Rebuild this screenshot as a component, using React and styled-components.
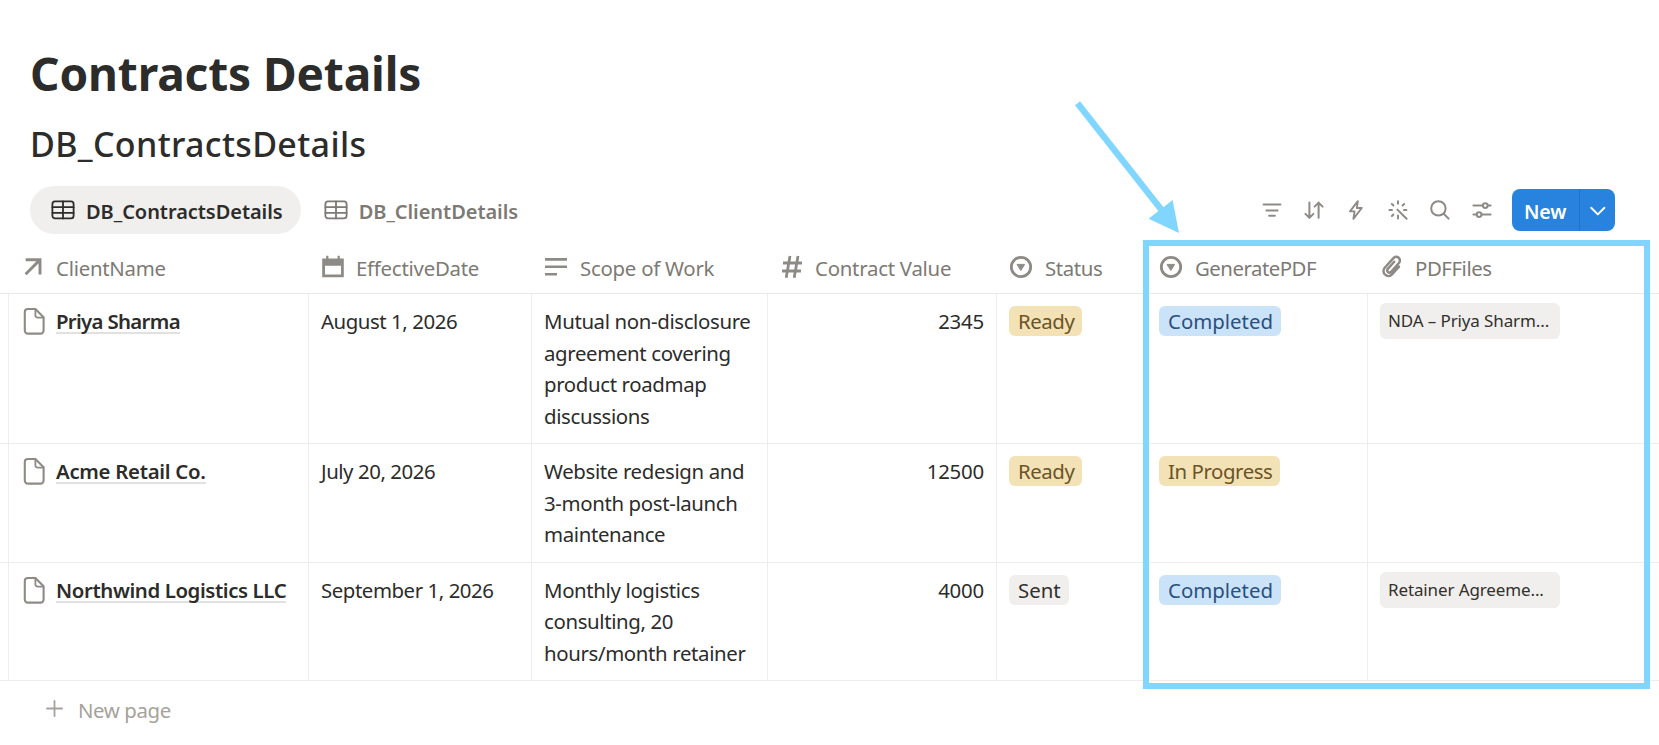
import React from 'react';
import styled, { createGlobalStyle } from 'styled-components';


const GlobalStyle = createGlobalStyle`
  *, *::before, *::after {
    box-sizing: border-box;
  }

  body {
    margin: 0;
    background: #ffffff;
    overflow: hidden;
  }
`;

const Page = styled.div`
  position: relative;
  width: 1659px;
  height: 745px;
  padding-top: 45px;
  overflow: hidden;
  background: #ffffff;
  color: #2c2c2b;
  font-family: 'Noto Sans', 'Open Sans', sans-serif;
  font-size: 20.4px;
  line-height: 31.5px;
  letter-spacing: -0.2px;
`;

const Title = styled.h1`
  margin: 0 0 21px 30px;
  font-size: 46px;
  line-height: 56px;
  font-weight: 700;
  letter-spacing: -0.12px;
`;

const Subtitle = styled.h2`
  margin: 0 0 20px 30px;
  font-size: 34px;
  line-height: 44px;
  font-weight: 500;
  letter-spacing: 0.35px;
`;

const Toolbar = styled.div`
  display: flex;
  align-items: center;
  justify-content: space-between;
  height: 48px;
  padding: 0 44px 0 30px;
  margin-bottom: 6px;
`;

const Tabs = styled.div`
  display: flex;
`;

const Tab = styled.button`
  display: flex;
  align-items: center;
  gap: 11px;
  height: 48px;
  padding: 0 18px 0 21px;
  margin: 0;
  border: 0;
  border-radius: 24px;
  background: ${(p) => (p.$active ? '#f0efed' : 'transparent')};
  color: ${(p) => (p.$active ? '#2c2c2b' : '#7d7a75')};
  font: inherit;
  font-size: 20px;
  font-weight: 600;
  letter-spacing: -0.05px;
  white-space: nowrap;

  span {
    padding-top: 4px;
    line-height: 30px;
  }

  & + & {
    margin-left: 2px;
  }
`;

const Actions = styled.div`
  display: flex;
  align-items: center;
  gap: 18px;
  color: #8e8b86;
`;

const NewButton = styled.div`
  display: flex;
  height: 42px;
  border-radius: 8px;
  background: #2783de;
  color: #ffffff;
  overflow: hidden;
`;

const NewLabel = styled.div`
  width: 68px;
  padding: 2px 0 0 12px;
  border-right: 1px solid #2273c5;
  font-size: 19.5px;
  font-weight: 600;
  line-height: 41px;
  letter-spacing: -0.1px;
`;

const NewMenu = styled.div`
  display: flex;
  align-items: center;
  justify-content: center;
  width: 35px;
  padding-top: 1px;
`;

const Row = styled.div`
  display: grid;
  grid-template-columns: 9px 300px 223px 236px 229px 150px 221px 1fr;
  border-bottom: 1px solid #ededec;
`;

const HeaderRow = styled(Row)`
  height: 54px;
  border-bottom-color: #e9e9e7;
`;

const HeaderCell = styled.div`
  display: flex;
  align-items: center;
  gap: 11px;
  padding-left: 12px;
  color: #7d7a75;
  white-space: nowrap;

  span {
    padding: 3px 0 0 ${(p) => p.$indent || '0'};
    line-height: 30px;
    letter-spacing: ${(p) => p.$track || '-0.25px'};
  }

  svg {
    color: #8e8b86;
  }
`;

const Cell = styled.div`
  padding: 12px 12px 11px;
  border-right: ${(p) => (p.$last ? '0' : '1px solid #ededec')};
  text-align: ${(p) => (p.$numeric ? 'right' : 'left')};
  letter-spacing: ${(p) => p.$track || '-0.2px'};
`;

const Gutter = styled.div`
  border-right: 1px solid #ededec;
`;

const NameCell = styled(Cell)`
  display: flex;
  align-items: flex-start;
  gap: 11px;
  font-weight: 600;
  white-space: nowrap;

  svg {
    color: #8e8b86;
    margin-top: 1px;
  }
`;

const PageLink = styled.span`
  height: 28px;
  border-bottom: 2px solid #e2e1df;
  letter-spacing: ${(p) => p.$track};
`;

const palette = {
  yellow: ['#f2e2b6', '#6b5427'],
  blue: ['#cbe3f8', '#2a5080'],
  gray: ['#f0efed', '#32302c'],
};

const Tag = styled.span`
  display: block;
  width: fit-content;
  height: 30px;
  padding: 0 8px 0 9px;
  border-radius: 6px;
  background: ${(p) => palette[p.$color][0]};
  color: ${(p) => palette[p.$color][1]};
  line-height: 31px;
  letter-spacing: ${(p) => (p.$color === 'yellow' ? '-0.42px' : '0')};
  white-space: nowrap;
`;

const FileTag = styled.span`
  display: block;
  width: 180px;
  height: 36px;
  margin-top: -3px;
  padding: 0 0 0 8px;
  border-radius: 6px;
  background: #f0efed;
  color: #32302c;
  font-size: 17px;
  line-height: 36px;
  letter-spacing: -0.12px;
  white-space: nowrap;
`;

const NewPage = styled.div`
  display: flex;
  align-items: center;
  gap: 15px;
  padding: 11px 0 0 46px;
  color: #a5a29c;
  letter-spacing: -0.4px;

  span {
    padding-top: 3px;
    line-height: 30px;
  }
`;

const Highlight = styled.div`
  position: absolute;
  left: 1143px;
  top: 240px;
  width: 507px;
  height: 449px;
  border: 6px solid #80d6ff;
`;

const Pointer = styled.svg`
  position: absolute;
  left: 1070px;
  top: 95px;
`;

const Svg = ({ w = 24, h = 24, sw = 2, children }) => (
  <svg width={w} height={h} viewBox={`0 0 ${w} ${h}`} fill="none" stroke="currentColor" strokeWidth={sw} strokeLinecap="round" strokeLinejoin="round">
    {children}
  </svg>
);

const TableIcon = () => (
  <Svg sw={1.8}>
    <rect x="1.4" y="3.4" width="21.2" height="17" rx="2.6" />
    <path d="M12 3.4v17M1.4 9.2h21.2M1.4 14.8h21.2" />
  </Svg>
);

const ArrowIcon = () => (
  <Svg sw={2.9}>
    <path d="M4.6 19.2 18.4 5.4M4.6 4.8h14.4v14.6" strokeLinecap="butt" strokeLinejoin="miter" />
  </Svg>
);

const CalendarIcon = () => (
  <Svg>
    <path d="M1.2 3.6h4V.8h2.2v2.8h9.2V.8h2.2v2.8h4v18.6H1.2zM4 10.8v8.6h16v-8.6z" fill="currentColor" fillRule="evenodd" stroke="none" />
  </Svg>
);

const TextIcon = () => (
  <Svg sw={2.6}>
    <path d="M1 4.4h22M1 11.8h22M1 19.2h12" strokeLinecap="butt" />
  </Svg>
);

const HashIcon = () => (
  <Svg sw={2.8}>
    <path d="M10 1 6.2 22.8M18 1 14.2 22.8M3 8h19M2 16h19" strokeLinecap="butt" />
  </Svg>
);

const SelectIcon = () => (
  <Svg sw={2.8}>
    <circle cx="12" cy="12" r="9.7" />
    <path d="M8.4 9.4h7.2L12 15.2z" fill="currentColor" strokeWidth="1" />
  </Svg>
);

const ClipIcon = () => (
  <Svg sw={2.5}>
    <path d="M16.9 7v10.4a4.9 4.9 0 0 1-9.8 0V4.4a3.7 3.7 0 0 1 7.4 0v12.4a2.3 2.3 0 0 1-4.4 0V6.6" transform="rotate(42 12 12)" />
  </Svg>
);

const FileIcon = () => (
  <Svg h={28} sw={2.1}>
    <path d="M6.8 2h7.6l8.2 8.2v13.4a3 3 0 0 1-3 3H6.8a3 3 0 0 1-3-3V5a3 3 0 0 1 3-3z" />
    <path d="M14.4 2.4v6a2.2 2.2 0 0 0 2.2 2.2h5.8" strokeWidth="1.8" />
  </Svg>
);

const FilterIcon = () => (
  <Svg>
    <path d="M3.6 6.6h16.8M6.4 12.4h11.2M9.1 17.8h5.8" />
  </Svg>
);

const SortIcon = () => (
  <Svg sw={2}>
    <path d="M7.4 4.4v15.2M3.4 15.9l4 4 4-4M16.6 19.8V4.6M12.6 8.6l4-4 4 4" />
  </Svg>
);

const BoltIcon = () => (
  <Svg sw={1.9}>
    <path d="M13.8 3.2 6 13.4h4.6L9.4 20.8 17.8 10h-4.9z" />
  </Svg>
);

const WandIcon = () => (
  <Svg sw={2}>
    <path d="M11.4 11.6 20.6 20.8M12 3.2v2.6M12 17.6v2.8M3.4 12h2.6M18 12h2.4M5.9 6l1.5 1.5M16.6 7.5 18.1 6M5.9 18l1.5-1.5" />
  </Svg>
);

const SearchIcon = () => (
  <Svg sw={2}>
    <circle cx="10.4" cy="10.4" r="7.2" />
    <path d="m15.7 15.7 4.9 4.9" />
  </Svg>
);

const SettingsIcon = () => (
  <Svg sw={2}>
    <path d="M3.4 7.6h9.4M17.8 7.6h2.8M3.4 16.6h3.2M11.6 16.6h9" />
    <circle cx="15.3" cy="7.6" r="2.4" />
    <circle cx="9.1" cy="16.6" r="2.4" />
  </Svg>
);

const rows = [
  {
    name: 'Priya Sharma',
    track: '-0.68px',
    date: 'August 1, 2026',
    scope: 'Mutual non-disclosure agreement covering product roadmap discussions',
    value: '2345',
    status: ['Ready', 'yellow'],
    pdf: ['Completed', 'blue'],
    file: 'NDA – Priya Sharm...',
  },
  {
    name: 'Acme Retail Co.',
    track: '-0.3px',
    date: 'July 20, 2026',
    scope: 'Website redesign and 3-month post-launch maintenance',
    value: '12500',
    status: ['Ready', 'yellow'],
    pdf: ['In Progress', 'yellow'],
  },
  {
    name: 'Northwind Logistics LLC',
    track: '-0.4px',
    date: 'September 1, 2026',
    scope: 'Monthly logistics consulting, 20 hours/month retainer',
    value: '4000',
    status: ['Sent', 'gray'],
    pdf: ['Completed', 'blue'],
    file: 'Retainer Agreeme...',
  },
];

const App = () => {
  return (
    <Page>
      <GlobalStyle />
      <Title>Contracts Details</Title>
      <Subtitle>DB_ContractsDetails</Subtitle>
      <Toolbar>
        <Tabs>
          <Tab $active><TableIcon /><span>DB_ContractsDetails</span></Tab>
          <Tab><TableIcon /><span>DB_ClientDetails</span></Tab>
        </Tabs>
        <Actions>
          <FilterIcon />
          <SortIcon />
          <BoltIcon />
          <WandIcon />
          <SearchIcon />
          <SettingsIcon />
          <NewButton>
            <NewLabel>New</NewLabel>
            <NewMenu>
              <Svg w={18} h={18}><path d="m2.2 5.8 6.6 6.6 6.6-6.6" /></Svg>
            </NewMenu>
          </NewButton>
        </Actions>
      </Toolbar>
      <HeaderRow>
        <div />
        <HeaderCell><ArrowIcon /><span>ClientName</span></HeaderCell>
        <HeaderCell><CalendarIcon /><span>EffectiveDate</span></HeaderCell>
        <HeaderCell $indent="1px"><TextIcon /><span>Scope of Work</span></HeaderCell>
        <HeaderCell><HashIcon /><span>Contract Value</span></HeaderCell>
        <HeaderCell $indent="1px" $track="-0.4px"><SelectIcon /><span>Status</span></HeaderCell>
        <HeaderCell $indent="1px" $track="-0.5px"><SelectIcon /><span>GeneratePDF</span></HeaderCell>
        <HeaderCell $track="-0.45px"><ClipIcon /><span>PDFFiles</span></HeaderCell>
      </HeaderRow>
      {rows.map((row) => (
        <Row key={row.name}>
          <Gutter />
          <NameCell><FileIcon /><PageLink $track={row.track}>{row.name}</PageLink></NameCell>
          <Cell $track="-0.44px">{row.date}</Cell>
          <Cell $track="-0.36px">{row.scope}</Cell>
          <Cell $numeric>{row.value}</Cell>
          <Cell><Tag $color={row.status[1]}>{row.status[0]}</Tag></Cell>
          <Cell><Tag $color={row.pdf[1]}>{row.pdf[0]}</Tag></Cell>
          <Cell $last>{row.file && <FileTag>{row.file}</FileTag>}</Cell>
        </Row>
      ))}
      <NewPage>
        <Svg w={17} h={17} sw={1.8}><path d="M8.5 1v15M1 8.5h15" /></Svg>
        <span>New page</span>
      </NewPage>
      <Highlight />
      <Pointer width="120" height="145" viewBox="0 0 120 145">
        <path d="M7.5 8.3 94 118" stroke="#80d6ff" strokeWidth="6.4" />
        <path d="M109 138 78.6 123.7 102.6 105z" fill="#80d6ff" />
      </Pointer>
    </Page>
  );
};

export default App;
